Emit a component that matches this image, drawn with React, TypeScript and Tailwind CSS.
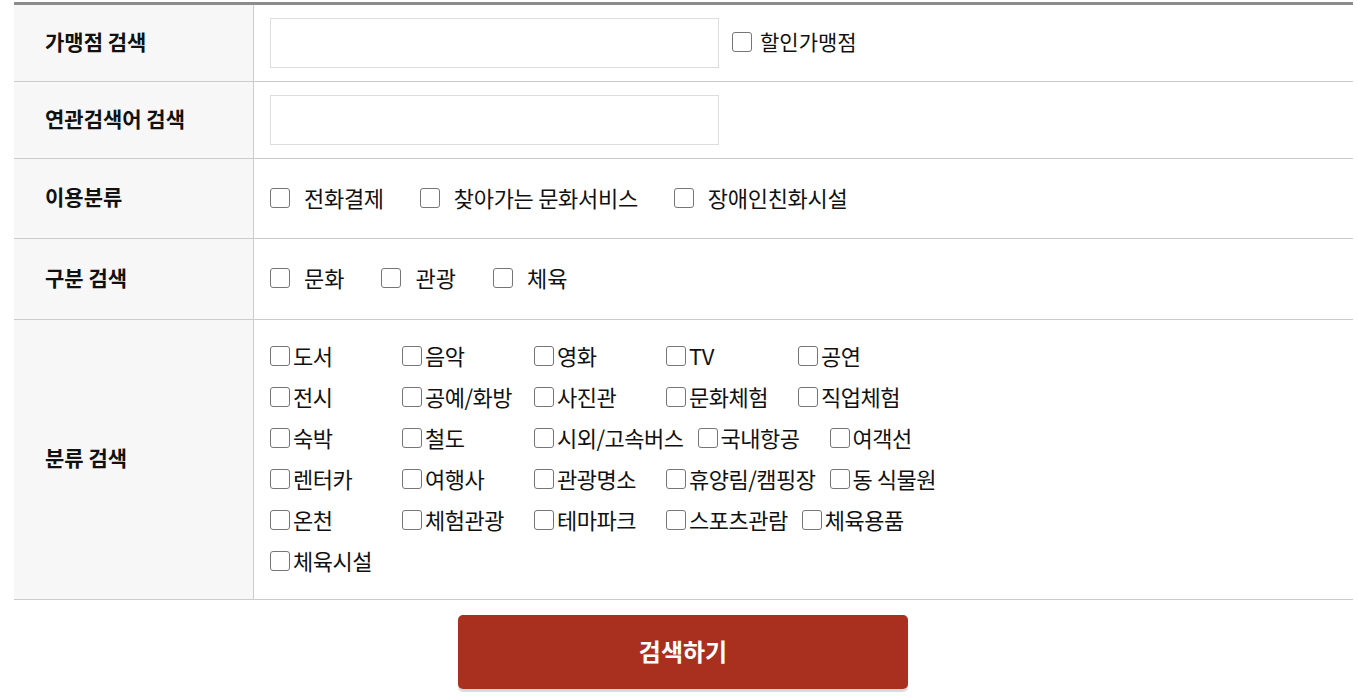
const usage = ["전화결제", "찾아가는 문화서비스", "장애인친화시설"];
const kinds = ["문화", "관광", "체육"];
const categories = [
  "도서", "음악", "영화", "TV", "공연",
  "전시", "공예/화방", "사진관", "문화체험", "직업체험",
  "숙박", "철도", "시외/고속버스", "국내항공", "여객선",
  "렌터카", "여행사", "관광명소", "휴양림/캠핑장", "동 식물원",
  "온천", "체험관광", "테마파크", "스포츠관람", "체육용품",
  "체육시설",
];

function Box() {
  return (
    <span className="inline-block w-[20px] h-[20px] shrink-0 rounded-[3px] border border-[#767676] bg-white" />
  );
}

function Row({ label, children, last }: { label: string; children: React.ReactNode; last?: boolean }) {
  return (
    <div className={"flex " + (last ? "" : "border-b border-[#cccccc]")}>
      <div className="w-[240px] shrink-0 bg-[#f7f7f7] border-r border-[#cccccc] flex items-center pl-[31px] pb-[3px] text-[21px] font-bold text-[#111]">
        {label}
      </div>
      <div className="flex-1 pl-[16px]">{children}</div>
    </div>
  );
}

export default function App() {
  return (
    <div
      className="bg-white w-[1358px] h-[697px] pt-[2px] text-[#111]"
      style={{ fontFamily: '"Noto Sans CJK KR", "Noto Sans", sans-serif' }}
    >
      <div className="ml-[14px] w-[1339px] border-t-[3px] border-[#8c8c8c] border-b border-b-[#cccccc]">
        <Row label="가맹점 검색">
          <div className="flex items-center h-[76px]">
            <div className="w-[449px] h-[50px] border border-[#dddddd]" />
            <label className="flex items-center ml-[13px] gap-[8px] text-[21px] pb-[3px]">
              <Box />
              할인가맹점
            </label>
          </div>
        </Row>
        <Row label="연관검색어 검색">
          <div className="flex items-center h-[76px]">
            <div className="w-[449px] h-[50px] border border-[#dddddd]" />
          </div>
        </Row>
        <Row label="이용분류">
          <div className="flex items-center h-[79px] gap-[36px] pb-[2px]">
            {usage.map((u) => (
              <label key={u} className="flex items-center gap-[14px] text-[22px] tracking-[-0.3px]">
                <Box />
                {u}
              </label>
            ))}
          </div>
        </Row>
        <Row label="구분 검색">
          <div className="flex items-center h-[80px] gap-[37px] pb-[3px]">
            {kinds.map((u) => (
              <label key={u} className="flex items-center gap-[14px] text-[22px]">
                <Box />
                {u}
              </label>
            ))}
          </div>
        </Row>
        <Row label="분류 검색" last>
          <div className="flex flex-wrap w-[700px] pt-[15px] pb-[18px] gap-x-[14px]">
            {categories.map((c) => (
              <label key={c} className="flex items-center min-w-[118px] h-[41px] gap-[3px] text-[22px] tracking-[-0.5px]">
                <Box />
                {c}
              </label>
            ))}
          </div>
        </Row>
      </div>
      <div className="flex pt-[15px] pl-[458px]">
        <button className="w-[450px] h-[74px] rounded-[5px] bg-[#a9301f] text-white text-[24px] font-bold pb-[3px] shadow-[0_3px_1px_rgba(0,0,0,0.15)]">
          검색하기
        </button>
      </div>
    </div>
  );
}
